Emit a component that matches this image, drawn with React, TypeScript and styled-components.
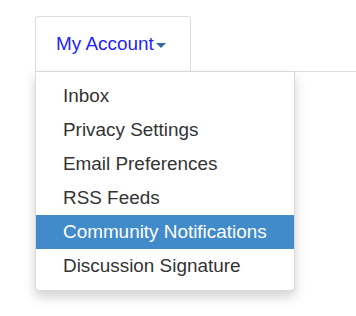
import React from 'react';
import styled, { createGlobalStyle } from 'styled-components';

const GlobalStyle = createGlobalStyle`
  html, body {
    margin: 0;
    padding: 0;
    background: #fff;
  }
  body {
    font-family: "Liberation Sans", Arial, Helvetica, sans-serif;
    font-size: 18.9px;
    color: #333;
  }
`;

const Page = styled.div`
  padding-top: 16px;
  width: 356px;
  height: 316px;
  box-sizing: border-box;
`;

const Tabs = styled.ul`
  list-style: none;
  margin: 0 0 0 35px;
  padding: 0;
  display: flex;
  border-bottom: 1px solid #ddd;
`;

const TabItem = styled.li`
  position: relative;
  margin-bottom: -1px;
`;

const TabLink = styled.a`
  display: flex;
  align-items: center;
  box-sizing: border-box;
  width: 156px;
  height: 56px;
  padding: 0 0 0 20px;
  border: 1px solid #ddd;
  border-bottom-color: transparent;
  border-radius: 4px 4px 0 0;
  background: #fff;
  color: #1f1fff;
  text-decoration: none;
  cursor: pointer;
`;

const Caret = styled.span`
  display: inline-block;
  width: 0;
  height: 0;
  margin-left: 2px;
  margin-top: 2px;
  border-top: 5px solid #34679a;
  border-left: 5px solid transparent;
  border-right: 5px solid transparent;
`;

const Menu = styled.ul`
  position: absolute;
  top: calc(100% - 1px);
  left: 0;
  z-index: 10;
  width: 260px;
  box-sizing: border-box;
  list-style: none;
  margin: 0;
  padding: 7px 0;
  background: #fff;
  border: 1px solid rgba(0, 0, 0, 0.15);
  border-radius: 0 0 4px 4px;
  box-shadow: 0 6px 12px rgba(0, 0, 0, 0.175);
`;

const MenuItem = styled.li<{ $active?: boolean }>`
  height: 34px;
  line-height: 34px;
  padding: 0 27px;
  white-space: nowrap;
  color: ${(p) => (p.$active ? '#fff' : '#333')};
  background: ${(p) => (p.$active ? '#428bca' : 'transparent')};
  cursor: pointer;
`;

const items = [
  'Inbox',
  'Privacy Settings',
  'Email Preferences',
  'RSS Feeds',
  'Community Notifications',
  'Discussion Signature',
];

export default function App() {
  return (
    <>
      <GlobalStyle />
      <Page>
        <Tabs>
          <TabItem>
            <TabLink>
              My Account
              <Caret />
            </TabLink>
            <Menu>
              {items.map((label) => (
                <MenuItem key={label} $active={label === 'Community Notifications'}>
                  {label}
                </MenuItem>
              ))}
            </Menu>
          </TabItem>
        </Tabs>
      </Page>
    </>
  );
}
